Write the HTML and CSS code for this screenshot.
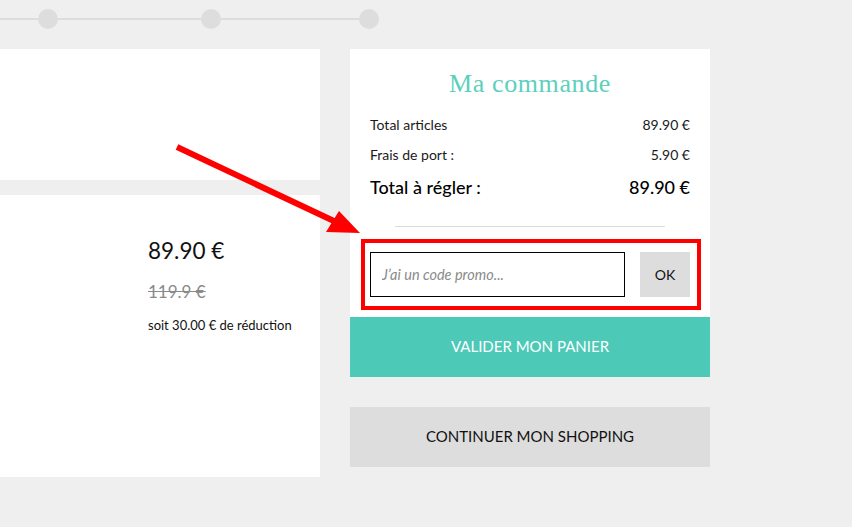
FILE: index.html
```html
<!DOCTYPE html>
<html lang="fr">
<head>
<meta charset="utf-8">
<title>Panier</title>
<link rel="stylesheet" href="styles.css">
</head>
<body>
<div class="page">
  <div class="stepper">
    <div class="seg seg1"></div>
    <div class="dot"></div>
    <div class="seg seg2"></div>
    <div class="dot"></div>
    <div class="seg seg3"></div>
    <div class="dot"></div>
  </div>
  <div class="main">
    <div class="left">
      <div class="card card-top"></div>
      <div class="card card-product">
        <div class="price">89.90 €</div>
        <div class="old-price">119.9 €</div>
        <div class="saving">soit 30.00 € de réduction</div>
      </div>
    </div>
    <div class="right">
      <div class="card summary">
        <h2 class="title">Ma commande</h2>
        <div class="row"><span>Total articles</span><span>89.90 €</span></div>
        <div class="row"><span>Frais de port :</span><span>5.90 €</span></div>
        <div class="row total"><span>Total à régler :</span><span>89.90 €</span></div>
        <div class="sep"></div>
        <form class="promo">
          <input class="promo-input" type="text" placeholder="J’ai un code promo...">
          <button class="promo-btn" type="button">OK</button>
        </form>
      </div>
      <button class="btn btn-validate" type="button">VALIDER MON PANIER</button>
      <button class="btn btn-continue" type="button">CONTINUER MON SHOPPING</button>
    </div>
  </div>
  <div class="highlight"></div>
  <svg class="arrow" width="852" height="527" viewBox="0 0 852 527">
    <line x1="177" y1="147" x2="336" y2="222" stroke="#ff0000" stroke-width="6"/>
    <polygon points="360,233 326,232 339,211" fill="#ff0000"/>
  </svg>
</div>
</body>
</html>
```

FILE: styles.css
```css
html, body {
  margin: 0;
  padding: 0;
  background: #efefef;
}
.page {
  position: relative;
  width: 852px;
  height: 527px;
  overflow: hidden;
  font-family: Lato, "Open Sans", sans-serif;
  color: #1a1a1a;
}
.stepper {
  display: flex;
  align-items: center;
  margin-top: -11px;
  height: 60px;
}
.seg {
  height: 2px;
  background: #dddddd;
}
.seg1 { width: 38px; }
.seg2 { width: 143px; }
.seg3 { width: 138px; }
.dot {
  width: 20px;
  height: 20px;
  border-radius: 50%;
  background: #dddddd;
}
.main {
  display: flex;
  gap: 30px;
}
.left {
  width: 320px;
  display: flex;
  flex-direction: column;
  gap: 15px;
}
.card {
  background: #ffffff;
}
.card-top {
  height: 131px;
}
.card-product {
  height: 282px;
  box-sizing: border-box;
  padding: 41px 0 0 148px;
}
.price {
  font-size: 22.5px;
  line-height: 30px;
  color: #111;
}
.old-price {
  margin-top: 11px;
  font-size: 17px;
  line-height: 30px;
  color: #8a8a8a;
  text-decoration: line-through;
}
.saving {
  margin-top: 8px;
  font-size: 13px;
  line-height: 20px;
  color: #111;
}
.right {
  width: 360px;
  display: flex;
  flex-direction: column;
}
.summary {
  padding: 18px 20px 20px;
}
.title {
  margin: 0 0 9px;
  text-align: center;
  font-family: "Liberation Serif", serif;
  font-weight: normal;
  font-size: 26px;
  line-height: 34px;
  letter-spacing: 0.6px;
  color: #5dcfbe;
}
.row {
  display: flex;
  justify-content: space-between;
  font-size: 14px;
  line-height: 30px;
  color: #1a1a1a;
}
.row.total {
  font-size: 18px;
  font-weight: 500;
  line-height: 34px;
  color: #000;
}
.sep {
  margin: 22px 25px 0;
  height: 1px;
  background: #dddddd;
}
.promo {
  margin: 25px 0 0;
  display: flex;
  justify-content: space-between;
}
.promo-input {
  width: 255px;
  height: 45px;
  box-sizing: border-box;
  border: 1px solid #000;
  padding: 0 11px;
  font-family: Lato, "Open Sans", sans-serif;
  font-size: 14.5px;
  font-style: italic;
  outline: none;
}
.promo-input::placeholder {
  color: #8a8a8a;
}
.promo-btn {
  width: 50px;
  height: 45px;
  border: 0;
  background: #dddddd;
  font-family: Lato, "Open Sans", sans-serif;
  font-size: 14px;
  color: #111;
  padding: 0;
}
.btn {
  display: block;
  width: 360px;
  height: 60px;
  border: 0;
  padding: 0 0 3px;
  font-family: Lato, "Open Sans", sans-serif;
  font-size: 15px;
}
.btn-validate {
  background: #4dc9b7;
  color: #ffffff;
}
.btn-continue {
  margin-top: 30px;
  background: #dddddd;
  color: #111;
}
.highlight {
  position: absolute;
  left: 361px;
  top: 239px;
  width: 340px;
  height: 71px;
  box-sizing: border-box;
  border: 4.5px solid #ff0000;
}
.arrow {
  position: absolute;
  left: 0;
  top: 0;
  pointer-events: none;
}
```
